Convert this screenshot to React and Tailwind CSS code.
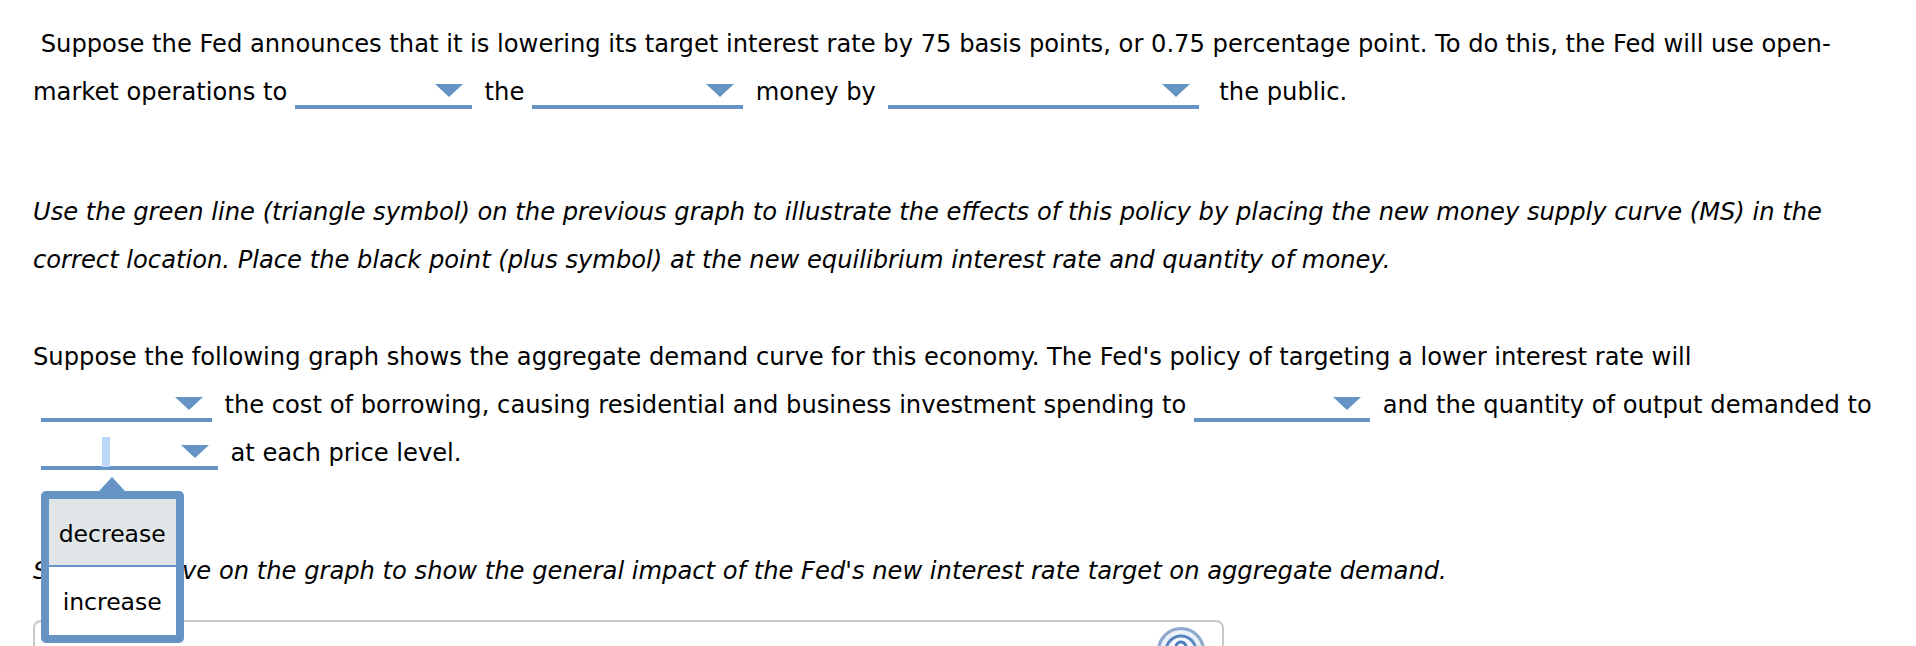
import React from "react";

function Arrow() {
  return (
    <svg className="absolute right-[9px] bottom-[8px]" width="28" height="13" viewBox="0 0 28 13">
      <polygon points="0,0 28,0 14,13" fill="#6594c5" />
    </svg>
  );
}

function Dropdown({ className = "", children }) {
  return (
    <span className={`relative inline-block h-[34px] align-[-9px] border-b-[4px] border-[#6594c5] ${className}`}>
      <Arrow />
      {children}
    </span>
  );
}

function Popup() {
  return (
    <>
      <svg className="absolute left-[58px] top-[41px]" width="26" height="14" viewBox="0 0 26 14">
        <polygon points="13,0 26,14 0,14" fill="#6594c5" />
      </svg>
      <div className="absolute left-0 top-[55px] w-[143px] border-[8px] border-[#6594c5] rounded-[5px] bg-white text-center text-[23.5px] leading-[70px] not-italic">
        <div className="h-[68px] bg-[#e0e6e8] border-b-2 border-[#6594c5]">decrease</div>
        <div className="h-[68px] bg-white">increase</div>
      </div>
    </>
  );
}

function HelpIcon() {
  return (
    <svg width="48" height="48" viewBox="0 0 48 48">
      <defs>
        <radialGradient id="hg" cx="50%" cy="40%" r="60%">
          <stop offset="0%" stopColor="#ffffff" />
          <stop offset="100%" stopColor="#dbe6f3" />
        </radialGradient>
      </defs>
      <circle cx="24" cy="24" r="22.5" fill="url(#hg)" stroke="#8ea9cc" strokeWidth="3" />
      <circle cx="24" cy="24" r="15" fill="none" stroke="#5a86c0" strokeWidth="3" />
      <path d="M19 20 a5 5 0 1 1 7 4.5 q-2 1 -2 4" fill="none" stroke="#4f7fbf" strokeWidth="3" strokeLinecap="round" />
    </svg>
  );
}

export default function App() {
  return (
    <div className="h-[646px] overflow-hidden bg-white text-black font-['DejaVu_Sans',Verdana,sans-serif] text-[24.2px] leading-[48px]">
      <div className="pl-[33px] pt-[20px] whitespace-nowrap">
        <p>
          {"\u00a0"}Suppose the Fed announces that it is lowering its target interest rate by 75 basis points, or 0.75 percentage point. To do this, the Fed will use open-
          <br />
          market operations to <Dropdown className="w-[177px] mr-[5px]" /> the <Dropdown className="w-[211px] mr-[5px]" /> money by{" "}
          <Dropdown className="w-[311px] ml-[4px] mr-[13px]" /> the public.
        </p>

        <p className="mt-[72px] italic">
          Use the green line (triangle symbol) on the previous graph to illustrate the effects of this policy by placing the new money supply curve (MS) in the
          <br />
          correct location. Place the black point (plus symbol) at the new equilibrium interest rate and quantity of money.
        </p>

        <p className="mt-[49px]">
          Suppose the following graph shows the aggregate demand curve for this economy. The Fed's policy of targeting a lower interest rate will
          <br />
          {"\u00a0"}
          <Dropdown className="w-[171px] mr-[5px]" /> the cost of borrowing, causing residential and business investment spending to{" "}
          <Dropdown className="w-[176px] mr-[5px]" /> and the quantity of output demanded to
          <br />
          {"\u00a0"}
          <Dropdown className="w-[177px] mr-[5px] z-10">
            <span className="absolute left-[61px] top-[1px] w-[8px] h-[30px] bg-[#bcd7f7]" />
            <Popup />
          </Dropdown>{" "}
          at each price level.
        </p>

        <p className="mt-[70px] italic">
          Shift the curve on the graph to show the general impact of the Fed's new interest rate target on aggregate demand.
        </p>

        <div className="mt-[25px] w-[1191px] h-[120px] border-2 border-[#c8c8c8] rounded-[8px] flex justify-end pt-[5px] pr-[17px]">
          <HelpIcon />
        </div>
      </div>
    </div>
  );
}
